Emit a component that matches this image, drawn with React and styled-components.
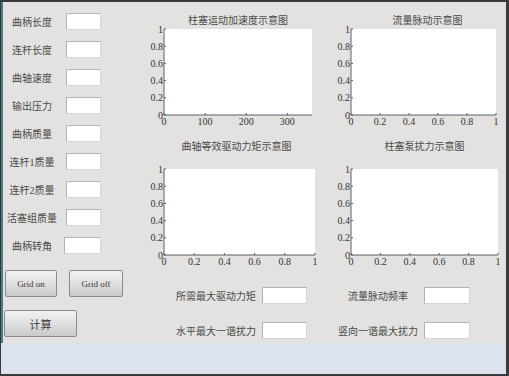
import React from "react"
import styled, { createGlobalStyle } from "styled-components"

const GlobalStyle = createGlobalStyle`
  html, body {
    margin: 0;
    padding: 0;
    background: #e3e2e0;
  }
  * { box-sizing: border-box; }
`

const FONT = `"Liberation Serif", "Noto Sans CJK SC", serif`

const Window = styled.div`
  width: 509px;
  height: 376px;
  display: flex;
  flex-direction: column;
  border-top: 2px solid #3a3a3a;
  border-right: 3px solid #3a3a3a;
  border-bottom: 2px solid #3a3a3a;
  border-left: 1px solid #2c3a3c;
  font-family: ${FONT};
  color: #4a4a4a;
`

const Main = styled.div`
  flex: 1;
  display: flex;
  background: #e3e2e0;
  border-left: 2px solid #4a7e82;
`

const Footer = styled.div`
  height: 31px;
  background: #dce3ee;
`

const LeftPanel = styled.div`
  width: 137px;
  padding: 11px 0 0 1px;
  display: flex;
  flex-direction: column;
`

const ParamList = styled.div`
  display: flex;
  flex-direction: column;
  gap: 11px;
`

const ParamRow = styled.div`
  display: flex;
  align-items: center;
  height: 17px;
`

const ParamLabel = styled.span`
  width: 50px;
  margin-left: 3px;
  text-align: center;
  font-size: 10px;
  white-space: nowrap;
`

const Field = styled.div`
  width: ${p => p.$w || 35}px;
  height: 17px;
  margin-left: ${p => p.$ml || 0}px;
  background: #ffffff;
  border: 1px solid #b4b4b4;
  border-bottom-color: #d6d6d6;
  border-right-color: #d6d6d6;
`

const ButtonRow = styled.div`
  display: flex;
  gap: 12px;
  margin: 16px 0 0 1px;
`

const Button = styled.button`
  width: ${p => p.$w}px;
  height: 27px;
  padding: 0;
  font-family: ${FONT};
  font-size: ${p => p.$fs || 9}px;
  color: #3a3a3a;
  background: linear-gradient(#f2f2f2, #e2e2e2 45%, #c9c9c9);
  border: 1px solid #8c8c8c;
  border-radius: 2px;
`

const CalcButton = styled(Button)`
  margin-top: 13px;
`

const RightPanel = styled.div`
  flex: 1;
  padding-top: 13px;
  display: flex;
  flex-direction: column;
`

const ChartGrid = styled.div`
  display: grid;
  grid-template-columns: 182px 184px;
  row-gap: 14px;
`

const ChartCell = styled.div`
  display: flex;
  flex-direction: column;
`

const ChartTitle = styled.div`
  margin-left: ${p => p.$left + (p.$shift || 0)}px;
  width: ${p => p.$width}px;
  margin-bottom: ${p => p.$gap}px;
  text-align: center;
  font-size: 10px;
  line-height: 12px;
  white-space: nowrap;
`

const PlotSvg = styled.svg`
  display: block;
  overflow: visible;
`

const TickText = styled.text`
  font-family: "Liberation Serif", serif;
  font-size: 10px;
  fill: #333;
`

const Results = styled.div`
  margin: 20px 0 0 36px;
  display: grid;
  grid-template-columns: auto auto;
  justify-content: start;
  column-gap: 31px;
  row-gap: 18px;
`

const ResultItem = styled.div`
  display: flex;
  align-items: center;
  gap: 6px;
`

const ResultLabel = styled.span`
  width: 80px;
  text-align: center;
  font-size: 10px;
  white-space: nowrap;
`

const PLOT_H = 86
const TOP = 2

const Chart = ({ title, left, width, cell, xmax, xticks, gap, shift }) => {
  const yticks = [0, 0.2, 0.4, 0.6, 0.8, 1]
  const bottom = TOP + PLOT_H
  return (
    <ChartCell>
      <ChartTitle $left={left} $width={width} $gap={gap} $shift={shift}>{title}</ChartTitle>
      <PlotSvg width={cell} height={100} viewBox={`0 0 ${cell} 100`}>
        <rect x={left} y={TOP} width={width} height={PLOT_H} fill="#fff" />
        <line x1={left} y1={TOP} x2={left} y2={bottom} stroke="#5a6068" strokeWidth="1" />
        <line x1={left} y1={bottom} x2={left + width} y2={bottom} stroke="#5a6068" strokeWidth="1.2" />
        {yticks.map(v => {
          const y = bottom - v * PLOT_H
          return (
            <g key={v}>
              <line x1={left} y1={y} x2={left + 2} y2={y} stroke="#5a6068" />
              <TickText x={left - 1} y={y + 3.5} textAnchor="end">{v}</TickText>
            </g>
          )
        })}
        {xticks.map(v => {
          const x = left + (v / xmax) * width
          return (
            <g key={v}>
              <line x1={x} y1={bottom} x2={x} y2={bottom - 2} stroke="#5a6068" />
              <TickText x={x} y={bottom + 10} textAnchor="middle">{v}</TickText>
            </g>
          )
        })}
      </PlotSvg>
    </ChartCell>
  )
}

const params = ["曲柄长度", "连杆长度", "曲轴速度", "输出压力", "曲柄质量", "连杆1质量", "连杆2质量", "活塞组质量", "曲柄转角"]
const unit = [0, 0.2, 0.4, 0.6, 0.8, 1]

const App = () => {
  return (
    <>
      <GlobalStyle />
      <Window>
        <Main>
          <LeftPanel>
            <ParamList>
              {params.map((p, i) => (
                <ParamRow key={p}>
                  <ParamLabel>{p}</ParamLabel>
                  <Field $ml={i === 8 ? 7 : 9} $w={i === 8 ? 37 : 35} />
                </ParamRow>
              ))}
            </ParamList>
            <ButtonRow>
              <Button $w={52}>Grid on</Button>
              <Button $w={54}>Grid off</Button>
            </ButtonRow>
            <CalcButton $w={73} $fs={11}>计算</CalcButton>
          </LeftPanel>
          <RightPanel>
            <ChartGrid>
              <Chart title="柱塞运动加速度示意图" cell={182} left={24} width={148} xmax={360} xticks={[0, 100, 200, 300]} gap={0} />
              <Chart title="流量脉动示意图" cell={184} left={29} width={145} xmax={1} xticks={unit} gap={0} shift={4} />
              <Chart title="曲轴等效驱动力矩示意图" cell={182} left={24} width={151} xmax={1} xticks={unit} gap={14} shift={-3} />
              <Chart title="柱塞泵扰力示意图" cell={184} left={29} width={147} xmax={1} xticks={unit} gap={14} />
            </ChartGrid>
            <Results>
              <ResultItem>
                <ResultLabel>所需最大驱动力矩</ResultLabel>
                <Field $w={45} />
              </ResultItem>
              <ResultItem>
                <ResultLabel>流量脉动频率</ResultLabel>
                <Field $w={46} />
              </ResultItem>
              <ResultItem>
                <ResultLabel>水平最大一谐扰力</ResultLabel>
                <Field $w={45} />
              </ResultItem>
              <ResultItem>
                <ResultLabel>竖向一谐最大扰力</ResultLabel>
                <Field $w={46} />
              </ResultItem>
            </Results>
          </RightPanel>
        </Main>
        <Footer />
      </Window>
    </>
  )
}

export default App
